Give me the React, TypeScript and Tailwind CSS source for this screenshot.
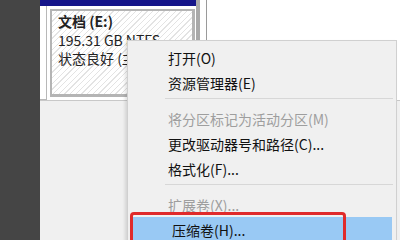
import React from "react";

const font = { fontFamily: "'Noto Sans CJK SC', 'Noto Sans', sans-serif" };

function Item({ label, disabled }: { label: string; disabled?: boolean }) {
  return (
    <div className={`h-[25px] flex items-center pl-[40px] text-[14px] leading-none ${disabled ? "text-[#9e9e9e]" : "text-[#111]"}`}>
      {label}
    </div>
  );
}

function Sep() {
  return (
    <div className="h-[11px] pl-[37px] pr-[3px] pt-[3px]">
      <div className="h-px bg-[#d7d7d7]" />
    </div>
  );
}

export default function App() {
  return (
    <div className="relative w-[400px] h-[240px] overflow-hidden flex bg-[#f0f0f0]" style={font}>
      <div className="w-[40px] h-full bg-[#454545]" />
      <div className="flex-1 flex flex-col">
        <div className="h-[101px] flex border-b border-[#c8c8c8]">
          <div className="w-[156px] flex flex-col bg-white">
            <div className="h-[6px] bg-[#15158a]" />
            <div className="flex-1 flex">
              <div className="w-[7px] border-r border-[#b8b8b8] border-b" />
              <div className="w-[3px]" />
              <div className="flex-1 mt-[3px] mb-[3px] mr-[1px] border-2 border-[#b4b4b4] border-b-[3px] border-r-[3px] bg-[repeating-linear-gradient(135deg,#ffffff_0px,#ffffff_3px,#e3e3e3_3px,#e3e3e3_4px)] pl-[6px] pt-[1px] text-[14px] leading-[18.5px] text-[#222] whitespace-nowrap overflow-hidden">
                <div className="font-bold">文档 (E:)</div>
                <div>195.31 GB NTFS</div>
                <div>状态良好 (主分区)</div>
              </div>
            </div>
          </div>
          <div className="w-[4px] bg-[#a9a9a9]" />
          <div className="w-[7px] bg-white border-r border-[#9a9a9a]" />
          <div className="flex-1 bg-white" />
        </div>
        <div className="flex-1 bg-[#f0f0f0]" />
      </div>

      <div className="absolute left-[127px] top-[40px] w-[270px] h-[210px] bg-[#f0f0f0] border border-[#d0d0d0] shadow-[-2px_2px_3px_rgba(0,0,0,0.12)] pt-[4px] flex flex-col">
        <Item label="打开(O)" />
        <Item label="资源管理器(E)" />
        <Sep />
        <Item label="将分区标记为活动分区(M)" disabled />
        <Item label="更改驱动器号和路径(C)..." />
        <Item label="格式化(F)..." />
        <Sep />
        <Item label="扩展卷(X)..." disabled />
        <div className="mx-[4px] bg-[#99c9f4]">
          <Item label="压缩卷(H)..." />
        </div>
      </div>

      <div className="absolute left-[130px] top-[212px] w-[216px] h-[40px] border-[3px] border-[#e02a2a] rounded-[4px]" />
    </div>
  );
}
